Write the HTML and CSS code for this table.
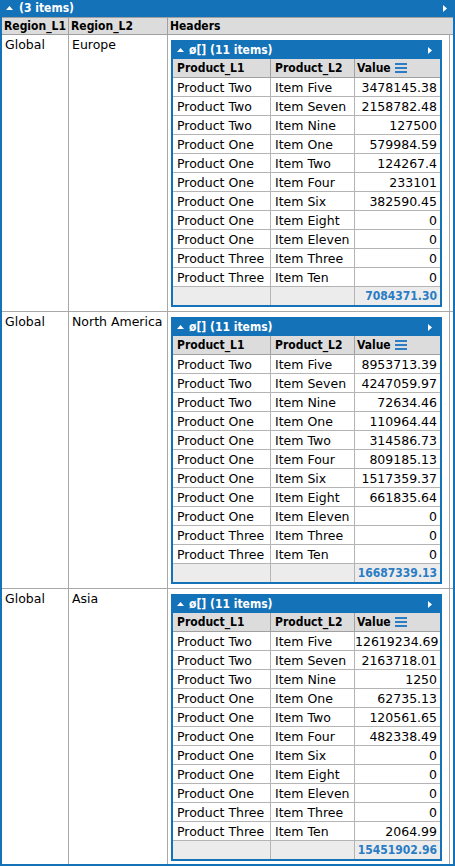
FILE: index.html
```html
<!DOCTYPE html>
<html>
<head>
<meta charset="utf-8">
<link rel="stylesheet" href="styles.css">
</head>
<body>
<div class="frame">
  <div class="bar">
    <svg class="up" width="7" height="4" viewBox="0 0 7 4"><polygon points="0,4 3.5,0 7,4" fill="#fff"/></svg>
    <span class="bar-text">(3 items)</span>
    <svg class="right" width="4" height="7" viewBox="0 0 4 7"><polygon points="0,0 4,3.5 0,7" fill="#fff"/></svg>
  </div>
  <div class="hdr">
    <div class="hc">Region_L1</div>
    <div class="hc">Region_L2</div>
    <div class="hc last">Headers</div>
  </div>
  <div id="rows"></div>
</div>
<script src="app.js"></script>
</body>
</html>
```
FILE: styles.css
```css
* { box-sizing: border-box; }
body { margin: 0; font-family: "DejaVu Sans", sans-serif; font-size: 12.5px; color: #000; background: #fff; }
.frame { width: 455px; height: 866px; border: 2px solid #1372b8; border-top: 0; overflow: hidden; display: flex; flex-direction: column; }
.bar { height: 17px; flex: none; background: #1372b8; color: #fff; display: flex; align-items: center; padding-left: 4px; padding-right: 6px; font-family: "DejaVu Sans Condensed", "DejaVu Sans", sans-serif; font-weight: bold; font-size: 12px; }
.bar .up { flex: none; margin-right: 6px; margin-top: -1px; }
.bar .bar-text { flex: 1; line-height: 17px; white-space: nowrap; }
.bar .right { flex: none; }
.hdr { flex: none; display: grid; grid-template-columns: 67px 99px 1fr; height: 18px; background: #dcdcdc; border-top: 1px solid #a0a0a0; border-bottom: 1px solid #a0a0a0; font-family: "DejaVu Sans Condensed", "DejaVu Sans", sans-serif; font-weight: bold; font-size: 12px; }
.hc { border-right: 1px solid #a0a0a0; padding-left: 2px; line-height: 16px; white-space: nowrap; overflow: hidden; }
.hc.last { border-right: 0; }
.row { display: grid; grid-template-columns: 67px 99px 282px; border-bottom: 1px solid #a8a8a8; }
.c { border-right: 1px solid #a8a8a8; padding: 2px 3px 0 3px; line-height: 16px; white-space: nowrap; }
.c.h { padding: 5px 0 4px 3px; }
.sub { width: 271px; border: 2px solid #1372b8; }
.sub .bar { height: 17px; padding-left: 4px; padding-right: 8px; }
.sub .bar .up { margin-right: 5px; }
.g { display: grid; grid-template-columns: 98px 84px 85px; }
.g > div { height: 19px; line-height: 19px; border-bottom: 1px solid #b4b4b4; border-right: 1px solid #b4b4b4; padding: 0 4px; white-space: nowrap; }
.g > div.n { border-right: 0; text-align: right; padding: 0 3px 0 0; }
.g.gh > div { background: #dcdcdc; border-color: #a0a0a0; font-family: "DejaVu Sans Condensed", "DejaVu Sans", sans-serif; font-weight: bold; font-size: 12px; line-height: 18px; }
.g.gh > div.v { border-right: 0; padding-left: 2px; display: flex; align-items: center; }
.g.gh .menu { margin-left: 4px; }
.g.gf > div { height: 18px; line-height: 18px; background: #ececec; border-bottom: 0; }
.g.gf > div.n { color: #2a7cc4; font-family: "DejaVu Sans Condensed", "DejaVu Sans", sans-serif; font-weight: bold; font-size: 12px; }
```
FILE: app.js
```js
var data = [
  { l1: "Global", l2: "Europe", total: "7084371.30", rows: [
    ["Product Two","Item Five","3478145.38"],["Product Two","Item Seven","2158782.48"],["Product Two","Item Nine","127500"],
    ["Product One","Item One","579984.59"],["Product One","Item Two","124267.4"],["Product One","Item Four","233101"],
    ["Product One","Item Six","382590.45"],["Product One","Item Eight","0"],["Product One","Item Eleven","0"],
    ["Product Three","Item Three","0"],["Product Three","Item Ten","0"]]},
  { l1: "Global", l2: "North America", total: "16687339.13", rows: [
    ["Product Two","Item Five","8953713.39"],["Product Two","Item Seven","4247059.97"],["Product Two","Item Nine","72634.46"],
    ["Product One","Item One","110964.44"],["Product One","Item Two","314586.73"],["Product One","Item Four","809185.13"],
    ["Product One","Item Six","1517359.37"],["Product One","Item Eight","661835.64"],["Product One","Item Eleven","0"],
    ["Product Three","Item Three","0"],["Product Three","Item Ten","0"]]},
  { l1: "Global", l2: "Asia", total: "15451902.96", rows: [
    ["Product Two","Item Five","12619234.69"],["Product Two","Item Seven","2163718.01"],["Product Two","Item Nine","1250"],
    ["Product One","Item One","62735.13"],["Product One","Item Two","120561.65"],["Product One","Item Four","482338.49"],
    ["Product One","Item Six","0"],["Product One","Item Eight","0"],["Product One","Item Eleven","0"],
    ["Product Three","Item Three","0"],["Product Three","Item Ten","2064.99"]]}
];
var up = '<svg class="up" width="7" height="4" viewBox="0 0 7 4"><polygon points="0,4 3.5,0 7,4" fill="#fff"/></svg>';
var right = '<svg class="right" width="4" height="7" viewBox="0 0 4 7"><polygon points="0,0 4,3.5 0,7" fill="#fff"/></svg>';
var menu = '<svg class="menu" width="12" height="10" viewBox="0 0 12 10"><rect x="0" y="0" width="12" height="2" fill="#2a7cc4"/><rect x="0" y="4" width="12" height="2" fill="#2a7cc4"/><rect x="0" y="8" width="12" height="2" fill="#2a7cc4"/></svg>';
var html = "";
data.forEach(function (d) {
  var s = '<div class="row"><div class="c">' + d.l1 + '</div><div class="c">' + d.l2 + '</div><div class="c h"><div class="sub">';
  s += '<div class="bar">' + up + '<span class="bar-text">ø[] (11 items)</span>' + right + '</div>';
  s += '<div class="g gh"><div>Product_L1</div><div>Product_L2</div><div class="v">Value' + menu + '</div></div>';
  s += '<div class="g">';
  d.rows.forEach(function (r) {
    s += '<div>' + r[0] + '</div><div>' + r[1] + '</div><div class="n">' + r[2] + '</div>';
  });
  s += '</div>';
  s += '<div class="g gf"><div></div><div></div><div class="n">' + d.total + '</div></div>';
  s += '</div></div></div>';
  html += s;
});
document.getElementById("rows").innerHTML = html;
```
